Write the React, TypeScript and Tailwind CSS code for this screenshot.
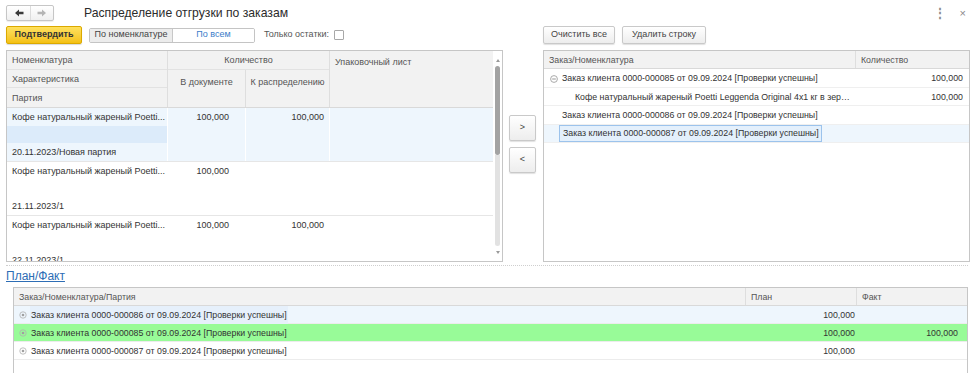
import React from "react";

const font = "font-['Liberation_Sans',Arial,sans-serif]";

function ArrowLeft({ color }: { color: string }) {
  return (
    <svg width="10" height="8" viewBox="0 0 10 8">
      <path d="M1 4 L5 0.5 L5 2.8 L9.5 2.8 L9.5 5.2 L5 5.2 L5 7.5 Z" fill={color} />
    </svg>
  );
}
function ArrowRight({ color }: { color: string }) {
  return (
    <svg width="10" height="8" viewBox="0 0 10 8">
      <path d="M9 4 L5 0.5 L5 2.8 L0.5 2.8 L0.5 5.2 L5 5.2 L5 7.5 Z" fill={color} />
    </svg>
  );
}

function MinusCircle() {
  return (
    <svg width="8" height="8" viewBox="0 0 8 8">
      <circle cx="4" cy="4" r="3.4" fill="none" stroke="#a0a0a0" strokeWidth="0.9" />
      <path d="M2.2 4 H5.8" stroke="#8a8a8a" strokeWidth="0.9" />
    </svg>
  );
}

function DotCircle() {
  return (
    <svg width="8" height="8" viewBox="0 0 8 8">
      <circle cx="4" cy="4" r="3.2" fill="none" stroke="#b0b0b0" strokeWidth="0.8" />
      <circle cx="4" cy="4" r="1.3" fill="#a0a0a0" />
    </svg>
  );
}

function Btn({ children, w }: { children: React.ReactNode; w: string }) {
  return (
    <div
      className={`${w} h-[18px] flex items-center justify-center rounded-[2px] border border-[#c9c9c9] bg-gradient-to-b from-white to-[#ededed] shadow-[0_1px_1px_rgba(0,0,0,0.12)] text-[9px] text-[#444]`}
    >
      {children}
    </div>
  );
}

export default function App() {
  return (
    <div className={`w-[974px] h-[373px] overflow-hidden bg-white text-[#333] ${font}`}>
      {/* Title bar */}
      <div className="h-[26px] flex items-start pt-[5px] pl-[6px] pr-[8px]">
        <div className="w-[48px] h-[16px] flex rounded-[2px] border border-[#c6c6c6] bg-gradient-to-b from-white to-[#f0f0f0] shadow-[0_1px_1px_rgba(0,0,0,0.08)]">
          <div className="w-[24px] flex items-center justify-center border-r border-[#dcdcdc]">
            <ArrowLeft color="#3a3a3a" />
          </div>
          <div className="flex-1 flex items-center justify-center">
            <ArrowRight color="#b5b5b5" />
          </div>
        </div>
        <div className="ml-[30px] text-[12.2px] leading-[16px] text-[#2b2b2b]">Распределение отгрузки по заказам</div>
        <div className="ml-auto flex items-center gap-[14px] text-[#8a8a8a] pt-[1px]">
          <span className="text-[12px] leading-[14px] font-bold">⋮</span>
          <span className="text-[11px] leading-[14px]">×</span>
        </div>
      </div>

      {/* Main area */}
      <div className="flex pl-[6px] h-[236px]">
        {/* Left column */}
        <div className="w-[497px] flex flex-col">
          <div className="h-[18px] flex items-center">
            <div className="w-[76px] h-[18px] flex items-center justify-center rounded-[2px] border border-[#dba900] bg-gradient-to-b from-[#ffe15c] to-[#f4c10f] shadow-[0_1px_1px_rgba(0,0,0,0.15)] text-[9px] font-bold text-[#333]">
              Подтвердить
            </div>
            <div className="ml-[7px] w-[166px] h-[15px] flex rounded-[2px] border border-[#c4c4c4] text-[9px] overflow-hidden">
              <div className="w-[83px] flex items-center justify-center bg-[#ececec] text-[#444] border-r border-[#c8c8c8]">По номенклатуре</div>
              <div className="flex-1 flex items-center justify-center bg-white text-[#3b7dc9]">По всем</div>
            </div>
            <div className="ml-[9px] text-[9px] text-[#555]">Только остатки:</div>
            <div className="ml-[5px] w-[10px] h-[10px] border border-[#a8a8a8] rounded-[1px] bg-white" />
          </div>
          <div className="mt-[6px] h-[212px] border border-[#c6c6c6] flex text-[9px]">
            <div className="w-[486px] flex flex-col overflow-hidden">
              {/* header */}
              <div className="h-[57px] shrink-0 flex bg-[#f2f2f2] border-b border-[#d9d9d9] text-[#555]">
                <div className="w-[161px] flex flex-col border-r border-[#dedede]">
                  <div className="h-[19px] flex items-center pt-[2px] pl-[5px] border-b border-[#e2e2e2]">Номенклатура</div>
                  <div className="h-[19px] flex items-center pt-[2px] pl-[5px] border-b border-[#e2e2e2]">Характеристика</div>
                  <div className="h-[19px] flex items-center pt-[2px] pl-[5px]">Партия</div>
                </div>
                <div className="w-[162px] flex flex-col border-r border-[#dedede]">
                  <div className="h-[19px] flex items-center pt-[2px] justify-center border-b border-[#e2e2e2]">Количество</div>
                  <div className="flex-1 flex">
                    <div className="w-[78px] border-r border-[#dedede] flex justify-center pt-[6px]">В документе</div>
                    <div className="flex-1 flex justify-center pt-[6px]">К распределению</div>
                  </div>
                </div>
                <div className="flex-1 pl-[5px] pt-[5px]">Упаковочный лист</div>
              </div>
              {/* rows */}
              {[
                { sel: true, d: "100,000", r: "100,000", p: "20.11.2023/Новая партия" },
                { sel: false, d: "100,000", r: "", p: "21.11.2023/1" },
                { sel: false, d: "100,000", r: "100,000", p: "22.11.2023/1" },
              ].map((row, i) => (
                <div
                  key={i}
                  className={`h-[54px] shrink-0 flex border-b border-[#e6e6e6] ${row.sel ? "bg-[#eef6fd]" : "bg-white"}`}
                >
                  <div className="w-[161px] flex flex-col border-r border-white">
                    <div className="h-[18px] pt-[4px] leading-[11px] pl-[5px] whitespace-nowrap">Кофе натуральный жареный Poetti...</div>
                    <div className={`h-[18px] ${row.sel ? "bg-[#dcebfa]" : ""}`} />
                    <div className="h-[18px] pt-[4px] leading-[11px] pl-[5px]">{row.p}</div>
                  </div>
                  <div className="w-[78px] border-r border-white flex justify-end pr-[16px]">
                    <div className="h-[18px] pt-[4px] leading-[11px]">{row.d}</div>
                  </div>
                  <div className="w-[84px] border-r border-white flex justify-end pr-[5px]">
                    <div className="h-[18px] pt-[4px] leading-[11px]">{row.r}</div>
                  </div>
                  <div className="flex-1" />
                </div>
              ))}
            </div>
            {/* scrollbar */}
            <div className="w-[9px] flex flex-col items-center bg-white">
              <div className="h-[12px] flex items-end justify-center pb-[1px]">
                <svg width="4" height="3" viewBox="0 0 4 3"><path d="M0 3 L2 0 L4 3 Z" fill="#9a9a9a" /></svg>
              </div>
              <div className="mt-[3px] w-[5px] h-[89px] rounded-full bg-[#a3a3a3]" />
              <div className="w-[5px] h-[91px] rounded-b-full bg-[#e2e2e2]" />
              <div className="mt-[5px] flex justify-center">
                <svg width="4" height="3" viewBox="0 0 4 3"><path d="M0 0 L2 3 L4 0 Z" fill="#9a9a9a" /></svg>
              </div>
            </div>
          </div>
        </div>

        {/* Middle */}
        <div className="ml-[6px] w-[27px] pt-[89px] flex flex-col gap-[6px]">
          <div className="h-[26px] flex items-center justify-center rounded-[2px] border border-[#c9c9c9] bg-gradient-to-b from-white to-[#ededed] shadow-[0_1px_1px_rgba(0,0,0,0.12)] text-[9px] text-[#444]">&gt;</div>
          <div className="h-[26px] flex items-center justify-center rounded-[2px] border border-[#c9c9c9] bg-gradient-to-b from-white to-[#ededed] shadow-[0_1px_1px_rgba(0,0,0,0.12)] text-[9px] text-[#444]">&lt;</div>
        </div>

        {/* Right column */}
        <div className="ml-[7px] w-[427px] flex flex-col">
          <div className="h-[18px] flex items-center gap-[7px]">
            <Btn w="w-[72px]">Очистить все</Btn>
            <Btn w="w-[84px]">Удалить строку</Btn>
          </div>
          <div className="mt-[6px] h-[212px] border border-[#c6c6c6] flex flex-col text-[8.8px]">
            <div className="h-[18px] shrink-0 flex bg-[#f2f2f2] border-b border-[#d9d9d9] text-[#555]">
              <div className="w-[312px] flex items-center pt-[3px] pl-[5px] border-r border-[#dedede]">Заказ/Номенклатура</div>
              <div className="flex-1 flex items-center pt-[3px] pl-[5px]">Количество</div>
            </div>
            <div className="h-[18.5px] shrink-0 flex border-b border-[#efefef]">
              <div className="w-[312px] flex items-center pt-[2px] pl-[6px]">
                <MinusCircle />
                <span className="ml-[4px] whitespace-nowrap">Заказ клиента 0000-000085 от 09.09.2024 [Проверки успешны]</span>
              </div>
              <div className="flex-1 flex items-center pt-[2px] justify-end pr-[6px]">100,000</div>
            </div>
            <div className="h-[18.5px] shrink-0 flex border-b border-[#efefef]">
              <div className="w-[312px] flex items-center pt-[2px] pl-[31px] whitespace-nowrap">Кофе натуральный жареный Poetti Leggenda Original 4x1 кг в зер…</div>
              <div className="flex-1 flex items-center pt-[2px] justify-end pr-[6px]">100,000</div>
            </div>
            <div className="h-[18.5px] shrink-0 flex border-b border-[#efefef]">
              <div className="w-[312px] flex items-center pt-[2px] pl-[18px] whitespace-nowrap">Заказ клиента 0000-000086 от 09.09.2024 [Проверки успешны]</div>
              <div className="flex-1" />
            </div>
            <div className="h-[18.5px] shrink-0 flex bg-[#eef6fd] border-b border-[#efefef]">
              <div className="w-[312px] flex items-center pl-[15px]">
                <div className="h-[17px] w-[263px] flex items-center pt-[1px] pl-[3px] whitespace-nowrap border border-[#9cc3ec] bg-[#e4f0fc]">Заказ клиента 0000-000087 от 09.09.2024 [Проверки успешны]</div>
              </div>
              <div className="flex-1" />
            </div>
          </div>
        </div>
      </div>

      {/* separator */}
      <div className="mt-[3px] mx-[6px] border-t border-dotted border-[#cfcfcf]" />

      {/* Plan/Fact link */}
      <div className="pl-[6px] mt-[3px] h-[15px] text-[12px] leading-[15px] text-[#2d6db5] underline">План/Факт</div>

      {/* Bottom table */}
      <div className="ml-[13px] mt-[3px] w-[955px] h-[100px] border border-[#c6c6c6] text-[8.8px]">
        <div className="h-[18px] flex bg-[#f2f2f2] border-b border-[#d9d9d9] text-[#555]">
          <div className="w-[732px] flex items-center pt-[2px] pl-[5px] border-r border-[#dedede]">Заказ/Номенклатура/Партия</div>
          <div className="w-[111px] flex items-center pt-[2px] pl-[5px] border-r border-[#dedede]">План</div>
          <div className="flex-1 flex items-center pt-[2px] pl-[5px]">Факт</div>
        </div>
        {[
          { n: "0000-000086", bg: "bg-[#eef6fd]", cell: "bg-[#e6f0fb]", f: "" },
          { n: "0000-000085", bg: "bg-[#98fb98]", cell: "", f: "100,000" },
          { n: "0000-000087", bg: "bg-white", cell: "", f: "" },
        ].map((r, i) => (
          <div key={i} className={`h-[18px] flex border-b border-[#ececec] ${r.bg}`}>
            <div className="w-[732px] flex items-center pl-[5px]">
              <DotCircle />
              <span className={`ml-[3px] h-[18px] flex items-center pt-[3px] px-[1px] whitespace-nowrap ${r.cell}`}>Заказ клиента {r.n} от 09.09.2024 [Проверки успешны]</span>
            </div>
            <div className="w-[111px] flex items-center pt-[3px] justify-end pr-[2px]">100,000</div>
            <div className="flex-1 flex items-center pt-[3px] justify-end pr-[9px]">{r.f}</div>
          </div>
        ))}
      </div>
    </div>
  );
}
